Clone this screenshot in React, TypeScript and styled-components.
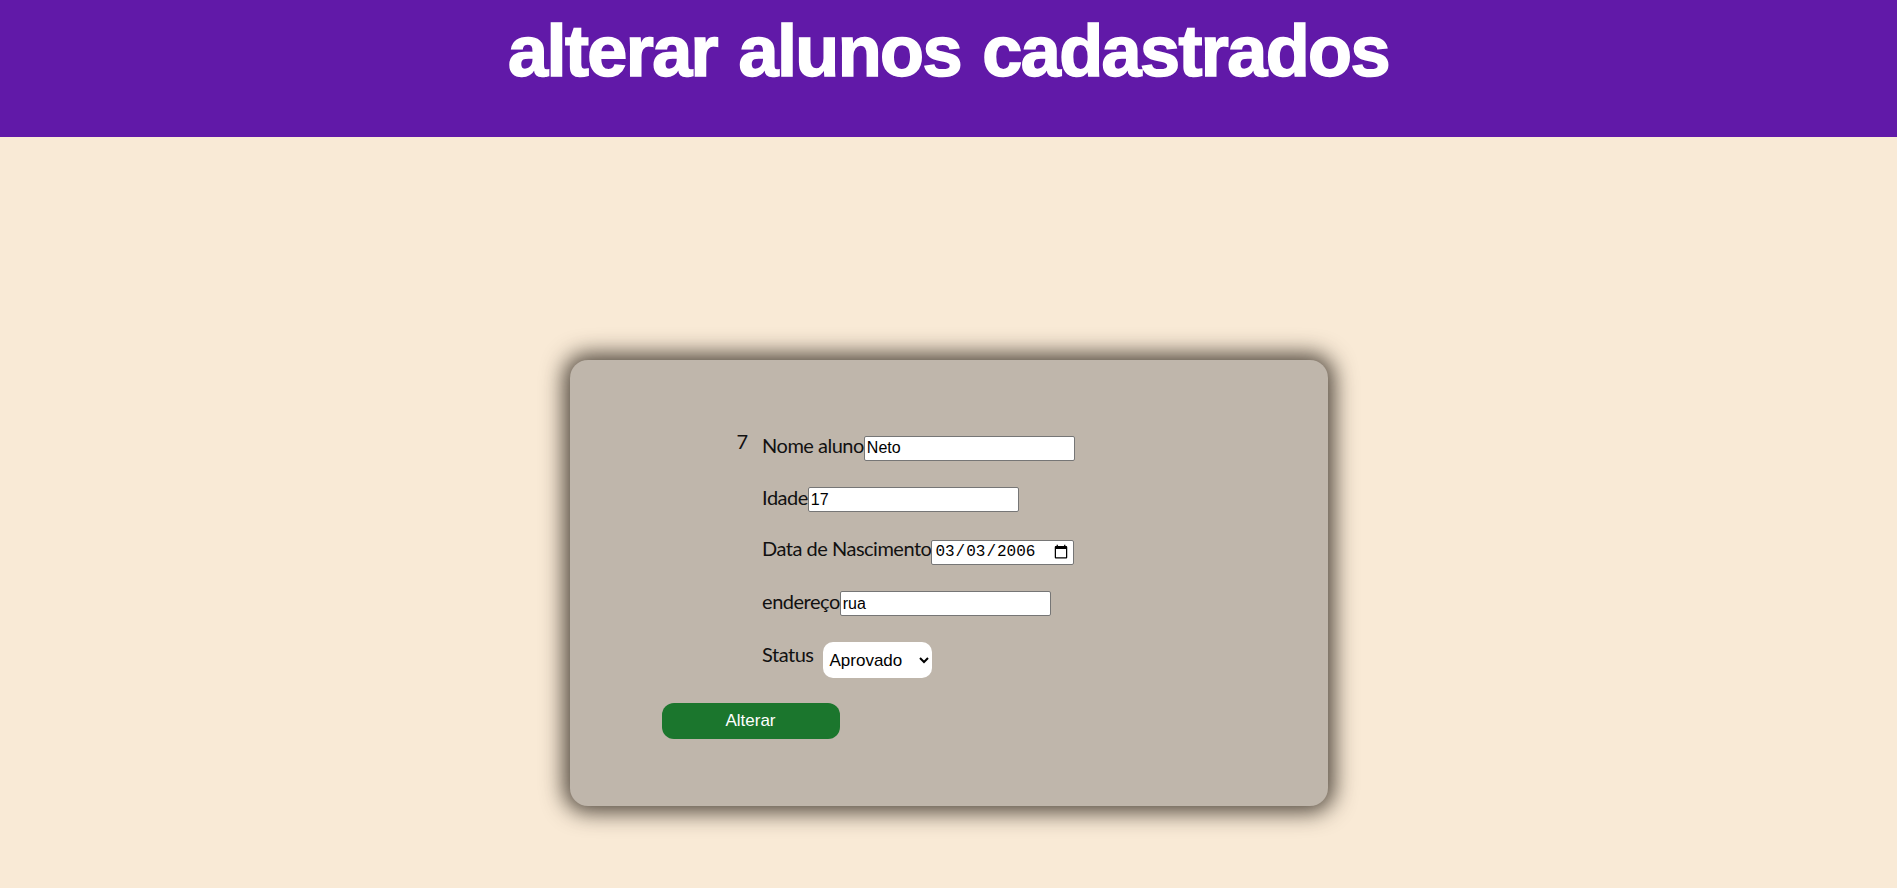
import React from 'react';
import styled, { createGlobalStyle } from 'styled-components';

const GlobalStyle = createGlobalStyle`
  html, body {
    margin: 0;
    padding: 0;
  }

  body {
    background-color: #f9ead6;
    min-height: 100vh;
    font-family: 'Lato', 'Liberation Sans', sans-serif;
  }
`;

const Header = styled.header`
  background-color: #6119a8;
  height: 137px;
  box-sizing: border-box;
  padding-top: 10px;
  text-align: center;
`;

const Title = styled.h1`
  margin: 0;
  color: #ffffff;
  font-family: 'Liberation Sans', Arial, sans-serif;
  font-weight: 700;
  font-size: 72px;
  letter-spacing: -1.6px;
  word-spacing: 3px;
  -webkit-text-stroke: 1.6px #ffffff;
`;

const Main = styled.main`
  display: flex;
  justify-content: center;
  padding-top: 223px;
  padding-bottom: 82px;
`;

const Card = styled.form`
  width: 758px;
  height: 446px;
  box-sizing: border-box;
  padding-top: 75px;
  background-color: #bfb6ab;
  border-radius: 18px;
  box-shadow: 0 0 22px 6px rgba(35, 28, 20, 0.8);
  display: flex;
  flex-direction: column;
  align-items: flex-start;
`;

const FormGrid = styled.div`
  display: flex;
  align-items: flex-start;
  gap: 14px;
  margin-left: 167px;
`;

const IdCell = styled.span`
  font-size: 20px;
  line-height: 12px;
  color: #111;
`;

const Fields = styled.div`
  display: flex;
  flex-direction: column;
  gap: 26px;
`;

const Field = styled.div<{ $top?: boolean }>`
  display: flex;
  align-items: ${(p) => (p.$top ? 'flex-start' : 'baseline')};
`;

const Label = styled.label<{ $top?: boolean }>`
  font-size: 20px;
  letter-spacing: -0.5px;
  line-height: ${(p) => (p.$top ? '24px' : '20px')};
  color: #111;
`;

const TextInput = styled.input<{ $w: number }>`
  width: ${(p) => p.$w}px;
  height: 25px;
  box-sizing: border-box;
  padding: 1px 2px;
  border: 1px solid #767676;
  border-radius: 2px;
  background: #ffffff;
  font-family: 'Liberation Sans', Arial, sans-serif;
  font-size: 16px;
  color: #000;
`;

const DateInput = styled(TextInput)`
  font-family: 'Liberation Mono', 'DejaVu Sans Mono', monospace;
`;

const Select = styled.select`
  margin-left: 10px;
  width: 109px;
  height: 36px;
  border: none;
  border-radius: 10px;
  background: #ffffff;
  padding: 0 2px;
  font-family: 'Liberation Sans', Arial, sans-serif;
  font-size: 17px;
  color: #000;
`;

const SubmitButton = styled.button`
  margin-top: 25px;
  margin-left: 92px;
  width: 178px;
  height: 36px;
  border: none;
  border-radius: 12px;
  background-color: #1b762d;
  color: #ffffff;
  font-family: 'Liberation Sans', Arial, sans-serif;
  font-size: 17px;
  cursor: pointer;
`;

const App: React.FC = () =>
{
  return (
    <>
      <GlobalStyle />
      <Header>
        <Title>alterar alunos cadastrados</Title>
      </Header>
      <Main>
        <Card onSubmit={(e) => e.preventDefault()}>
          <FormGrid>
            <IdCell>7</IdCell>
            <Fields>
              <Field>
                <Label htmlFor="nome">Nome aluno</Label>
                <TextInput id="nome" $w={211} type="text" defaultValue="Neto" />
              </Field>
              <Field>
                <Label htmlFor="idade">Idade</Label>
                <TextInput id="idade" $w={211} type="number" defaultValue="17" />
              </Field>
              <Field>
                <Label htmlFor="nasc">Data de Nascimento</Label>
                <DateInput id="nasc" $w={143} type="date" defaultValue="2006-03-03" />
              </Field>
              <Field>
                <Label htmlFor="end">endereço</Label>
                <TextInput id="end" $w={211} type="text" defaultValue="rua" />
              </Field>
              <Field $top>
                <Label $top htmlFor="status">Status</Label>
                <Select id="status" defaultValue="Aprovado">
                  <option>Aprovado</option>
                  <option>Reprovado</option>
                </Select>
              </Field>
            </Fields>
          </FormGrid>
          <SubmitButton type="submit">Alterar</SubmitButton>
        </Card>
      </Main>
    </>
  );
}

export default App;
